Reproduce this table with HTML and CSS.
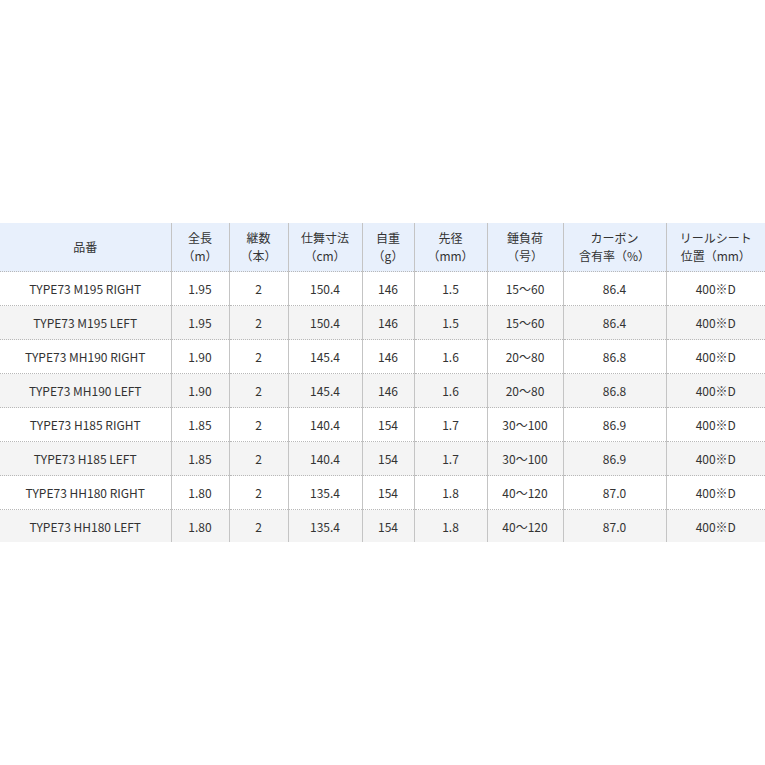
FILE: index.html
```html
<!DOCTYPE html>
<html lang="ja">
<head>
<meta charset="utf-8">
<link rel="stylesheet" href="styles.css">
</head>
<body>
<div class="frame">
<table class="spec">
<colgroup>
<col class="c1"><col class="c2"><col class="c3"><col class="c4"><col class="c5"><col class="c6"><col class="c7"><col class="c8"><col class="c9">
</colgroup>
<thead>
<tr>
<th>品番</th>
<th>全長<br>（m）</th>
<th>継数<br>（本）</th>
<th>仕舞寸法<br>（cm）</th>
<th>自重<br>（g）</th>
<th>先径<br>（mm）</th>
<th>錘負荷<br>（号）</th>
<th>カーボン<br>含有率（%）</th>
<th>リールシート<br>位置（mm）</th>
</tr>
</thead>
<tbody>
<tr><td>TYPE73 M195 RIGHT</td><td>1.95</td><td>2</td><td>150.4</td><td>146</td><td>1.5</td><td>15～60</td><td>86.4</td><td>400※D</td></tr>
<tr><td>TYPE73 M195 LEFT</td><td>1.95</td><td>2</td><td>150.4</td><td>146</td><td>1.5</td><td>15～60</td><td>86.4</td><td>400※D</td></tr>
<tr><td>TYPE73 MH190 RIGHT</td><td>1.90</td><td>2</td><td>145.4</td><td>146</td><td>1.6</td><td>20～80</td><td>86.8</td><td>400※D</td></tr>
<tr><td>TYPE73 MH190 LEFT</td><td>1.90</td><td>2</td><td>145.4</td><td>146</td><td>1.6</td><td>20～80</td><td>86.8</td><td>400※D</td></tr>
<tr><td>TYPE73 H185 RIGHT</td><td>1.85</td><td>2</td><td>140.4</td><td>154</td><td>1.7</td><td>30～100</td><td>86.9</td><td>400※D</td></tr>
<tr><td>TYPE73 H185 LEFT</td><td>1.85</td><td>2</td><td>140.4</td><td>154</td><td>1.7</td><td>30～100</td><td>86.9</td><td>400※D</td></tr>
<tr><td>TYPE73 HH180 RIGHT</td><td>1.80</td><td>2</td><td>135.4</td><td>154</td><td>1.8</td><td>40～120</td><td>87.0</td><td>400※D</td></tr>
<tr><td>TYPE73 HH180 LEFT</td><td>1.80</td><td>2</td><td>135.4</td><td>154</td><td>1.8</td><td>40～120</td><td>87.0</td><td>400※D</td></tr>
</tbody>
</table>
</div>
</body>
</html>
```
FILE: styles.css
```css
html, body {
  margin: 0;
  padding: 0;
  background: #fff;
}
body {
  width: 765px;
  height: 765px;
  display: flex;
  align-items: center;
  font-family: "Noto Sans CJK JP", "Noto Sans", sans-serif;
  color: #333;
}
.frame {
  width: 765px;
  height: 319px;
  overflow: hidden;
}
.spec {
  width: 765px;
  table-layout: fixed;
  border-collapse: collapse;
  font-size: 12px;
}
.c1 { width: 171px; }
.c2 { width: 58px; }
.c3 { width: 59px; }
.c4 { width: 74px; }
.c5 { width: 52px; }
.c6 { width: 73px; }
.c7 { width: 76px; }
.c8 { width: 103px; }
.c9 { width: 99px; }
.spec th, .spec td {
  text-align: center;
  border-left: 1px solid #c4c4c4;
  padding: 0;
  white-space: nowrap;
}
.spec th:first-child, .spec td:first-child {
  border-left: none;
}
.spec th {
  background: #e8f0fc;
  font-weight: normal;
  height: 48px;
  line-height: 18px;
  border-bottom: 1px dotted #b8b8b8;
}
.spec td {
  height: 33px;
  border-bottom: 1px dotted #b8b8b8;
}
.spec tbody tr:nth-child(even) td {
  background: #f4f4f4;
}
```
